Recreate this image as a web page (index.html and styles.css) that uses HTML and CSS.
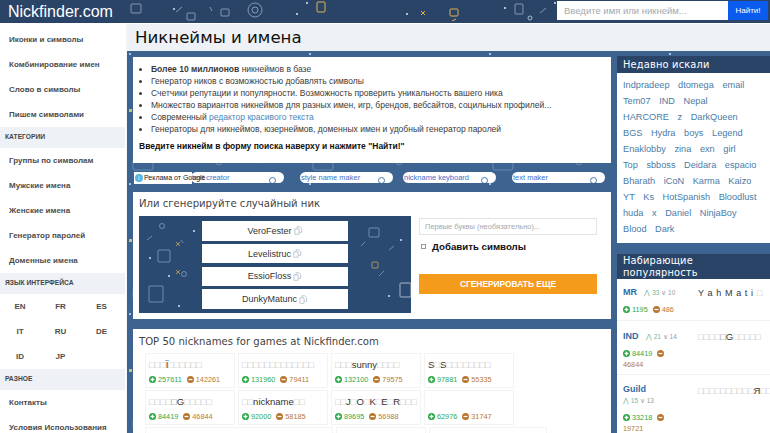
FILE: index.html
```html
<!DOCTYPE html>
<html lang="ru">
<head>
  <meta charset="UTF-8">
  <meta name="viewport" content="width=device-width, initial-scale=1.0">
  <title>Никнеймы и имена</title>
  <link rel="stylesheet" href="styles.css">
</head>
<body>
  <svg class="defs" xmlns="http://www.w3.org/2000/svg" aria-hidden="true">
    <symbol id="plus" viewBox="0 0 10 10"><circle cx="5" cy="5" r="5" fill="#27a844"/><path d="M5 2.2v5.6M2.2 5h5.6" stroke="#fff" stroke-width="1.8"/></symbol>
    <symbol id="minus" viewBox="0 0 10 10"><circle cx="5" cy="5" r="5" fill="#b9752c"/><path d="M2.2 5h5.6" stroke="#fff" stroke-width="1.8"/></symbol>
    <symbol id="copy" viewBox="0 0 10 10"><path d="M1 3.2h4.6v6H1zM3.4 3V.8h3l2.2 2.2v4H5.8" fill="#fff" stroke="#a9b4c2" stroke-width=".8"/></symbol>
  </svg>

  <header class="topbar">
    <a class="logo">Nickfinder.com</a>
    <form class="search">
      <input class="search-input" type="text" placeholder="Введите имя или никнейм...">
      <button class="search-btn" type="button">Найти!</button>
    </form>
  </header>

  <div class="page">
    <!-- боковое меню -->
    <nav class="sidebar">
      <a>Иконки и символы</a>
      <a>Комбинирование имен</a>
      <a>Слово в символы</a>
      <a>Пишем символами</a>
      <h4>Категории</h4>
      <a>Группы по символам</a>
      <a>Мужские имена</a>
      <a>Женские имена</a>
      <a>Генератор паролей</a>
      <a>Доменные имена</a>
      <h4>Язык интерфейса</h4>
      <div class="langs">
        <a>EN</a><a>FR</a><a>ES</a>
        <a>IT</a><a>RU</a><a>DE</a>
        <a>ID</a><a>JP</a>
      </div>
      <h4>Разное</h4>
      <a>Контакты</a>
      <a>Условия Использования</a>
    </nav>

    <main class="main">
      <h1 class="page-title">Никнеймы и имена</h1>
      <div class="columns">
        <div class="content">
          <section class="card intro">
            <ul>
              <li><b>Более 10 миллионов</b> никнеймов в базе</li>
              <li>Генератор ников с возможностью добавлять символы</li>
              <li>Счетчики репутации и популярности. Возможность проверить уникальность вашего ника</li>
              <li>Множество вариантов никнеймов для разных имен, игр, брендов, вебсайтов, социльных профилей...</li>
              <li>Современный <a>редактор красивого текста</a></li>
              <li>Генераторы для никнеймов, юзернеймов, доменных имен и удобный генератор паролей</li>
            </ul>
            <p>Введите никнейм в форму поиска наверху и нажмите "Найти!"</p>
          </section>

          <div class="ads">
            <span class="ad-label"><i class="ad-info">i</i>Реклама от Google</span>
            <a class="pill">text creator</a>
            <a class="pill">style name maker</a>
            <a class="pill pill-tight">nickname keyboard</a>
            <a class="pill">text maker</a>
          </div>

          <section class="card generator">
            <h3>Или сгенерируйте случайный ник</h3>
            <div class="gen-row">
              <div class="gen-names">
                <div class="gen-name">VeroFester <svg class="copy"><use href="#copy"/></svg></div>
                <div class="gen-name">Levelistruc <svg class="copy"><use href="#copy"/></svg></div>
                <div class="gen-name">EssioFloss <svg class="copy"><use href="#copy"/></svg></div>
                <div class="gen-name">DunkyMatunc <svg class="copy"><use href="#copy"/></svg></div>
              </div>
              <form class="gen-form">
                <input class="gen-input" type="text" placeholder="Первые буквы (необязательно)...">
                <label class="gen-check"><input type="checkbox"> Добавить символы</label>
                <button class="gen-btn" type="button">Сгенерировать еще</button>
              </form>
            </div>
          </section>

          <section class="card top">
            <h3>TOP 50 nicknames for games at Nickfinder.com</h3>
            <div class="nick-grid">
              <div class="nick">
                <div class="nick-name"><s>□□□</s>Ï<s>□□□□□□</s></div>
                <div class="stats"><svg class="ico"><use href="#plus"/></svg><span class="up">257611</span><svg class="ico"><use href="#minus"/></svg><span class="down">142261</span></div>
              </div>
              <div class="nick">
                <div class="nick-name"><s>□□□□□□□□□□□□□</s></div>
                <div class="stats"><svg class="ico"><use href="#plus"/></svg><span class="up">131960</span><svg class="ico"><use href="#minus"/></svg><span class="down">79411</span></div>
              </div>
              <div class="nick">
                <div class="nick-name"><s>□□□</s>sunny<s>□□□□</s></div>
                <div class="stats"><svg class="ico"><use href="#plus"/></svg><span class="up">132100</span><svg class="ico"><use href="#minus"/></svg><span class="down">79575</span></div>
              </div>
              <div class="nick">
                <div class="nick-name">S<s>□</s>S<s>□□□□□□□□</s></div>
                <div class="stats"><svg class="ico"><use href="#plus"/></svg><span class="up">97881</span><svg class="ico"><use href="#minus"/></svg><span class="down">55335</span></div>
              </div>
              <div class="nick">
                <div class="nick-name"><s>□□□□</s><u>□</u>G<s>□□□□□</s></div>
                <div class="stats"><svg class="ico"><use href="#plus"/></svg><span class="up">84419</span><svg class="ico"><use href="#minus"/></svg><span class="down">46844</span></div>
              </div>
              <div class="nick">
                <div class="nick-name"><s>□□</s>nickname<s>□□</s></div>
                <div class="stats"><svg class="ico"><use href="#plus"/></svg><span class="up">92000</span><svg class="ico"><use href="#minus"/></svg><span class="down">58185</span></div>
              </div>
              <div class="nick">
                <div class="nick-name"><s>□□</s>J<s>□</s>O<s>□</s>K<s>□</s>E<s>□</s>R<s>□□□</s></div>
                <div class="stats"><svg class="ico"><use href="#plus"/></svg><span class="up">89695</span><svg class="ico"><use href="#minus"/></svg><span class="down">56988</span></div>
              </div>
              <div class="nick">
                <div class="nick-name">&nbsp;</div>
                <div class="stats"><svg class="ico"><use href="#plus"/></svg><span class="up">62976</span><svg class="ico"><use href="#minus"/></svg><span class="down">31747</span></div>
              </div>
              <div class="nick nick-wide"></div>
              <div class="nick"></div>
              <div class="nick nick-long"></div>
            </div>
          </section>
        </div>

        <aside class="rail">
          <section class="rail-box">
            <h3 class="rail-title">Недавно искали</h3>
            <div class="tags">
              <div><a>Indpradeep</a> <a>dtomega</a> <a>email</a></div>
              <div><a>Tem07</a> <a>IND</a> <a>Nepal</a></div>
              <div><a>HARCORE</a> <a>z</a> <a>DarkQueen</a></div>
              <div><a>BGS</a> <a>Hydra</a> <a>boys</a> <a>Legend</a></div>
              <div><a>Enaklobby</a> <a>zina</a> <a>exn</a> <a>girl</a></div>
              <div><a>Top</a> <a>sbboss</a> <a>Deidara</a> <a>espacio</a></div>
              <div><a>Bharath</a> <a>iCoN</a> <a>Karma</a> <a>Kaizo</a></div>
              <div><a>YT</a> <a>Ks</a> <a>HotSpanish</a> <a>Bloodlust</a></div>
              <div><a>huda</a> <a>x</a> <a>Daniel</a> <a>NinjaBoy</a></div>
              <div><a>Blood</a> <a>Dark</a></div>
            </div>
          </section>

          <section class="rail-box">
            <h3 class="rail-title rail-title-two">Набирающие<br>популярность</h3>
            <div class="trend trend-first">
              <div class="trend-info">
                <a class="trend-tag">MR</a> <span class="moves"><em>⋀ 33</em> <i>∨ 10</i></span>
                <div class="stats"><svg class="ico"><use href="#plus"/></svg><span class="up">1195</span><svg class="ico"><use href="#minus"/></svg><span class="down">486</span></div>
              </div>
              <div class="trend-name spaced">Y a h M a t i <s>□</s></div>
            </div>
            <div class="trend">
              <div class="trend-info">
                <a class="trend-tag">IND</a> <span class="moves"><em>⋀ 21</em> <i>∨ 14</i></span>
                <div class="stats"><svg class="ico"><use href="#plus"/></svg><span class="up">84419</span><svg class="ico"><use href="#minus"/></svg><br><span class="down">46844</span></div>
              </div>
              <div class="trend-name"><s>□□□□</s><u>□</u>G<s>□□□□□</s></div>
            </div>
            <div class="trend">
              <div class="trend-info">
                <a class="trend-tag">Guild</a><br><span class="moves"><em>⋀ 15</em> <i>∨ 13</i></span>
                <div class="stats"><svg class="ico"><use href="#plus"/></svg><span class="up">33218</span><svg class="ico"><use href="#minus"/></svg><br><span class="down">19721</span></div>
              </div>
              <div class="trend-name"><s>□□□□□□□□□□</s>Я<s>□□</s></div>
            </div>
          </section>
        </aside>
      </div>
    </main>
  </div>
</body>
</html>
```

FILE: styles.css
```css
* {
  box-sizing: border-box;
}

html, body {
  height: 433px;
  overflow: hidden;
}

body {
  margin: 0;
  font-family: "Liberation Sans", Arial, sans-serif;
  font-size: 8.5px;
  color: #333;
  background: #3d6491;
}

.defs {
  display: none;
}

/* шапка */
.topbar {
  display: flex;
  align-items: flex-start;
  justify-content: space-between;
  height: 24px;
  padding: 1px 2px 0 8px;
  border-bottom: 1px solid #fff;
  background-color: #2a4468;
  background-image: url("data:image/svg+xml,<svg xmlns='http://www.w3.org/2000/svg' width='770' height='23' fill='none' stroke-width='1'><g stroke='%23a9bcd2' stroke-opacity='.7'><rect x='131' y='4' width='10' height='9' rx='1'/><rect x='187' y='13' width='8' height='7' rx='1'/><rect x='221' y='9' width='8' height='7' rx='1'/><circle cx='255' cy='10' r='7'/><circle cx='255' cy='10' r='3'/><rect x='515' y='4' width='8' height='10' rx='1'/><path d='M176 12l6 -5M210 7l2 4M540 13l6-5'/></g><g stroke='%23e0b050'><rect x='317' y='2' width='8' height='10' rx='1'/><path d='M421 11l4 4M425 11l-4 4M452 21l4 -2'/><rect x='450' y='9' width='8' height='7' rx='1'/></g><g fill='%23dfe7f1'><circle cx='174' cy='9' r='1'/><circle cx='297' cy='14' r='1'/><circle cx='307' cy='3' r='1'/><circle cx='407' cy='14' r='1'/><circle cx='505' cy='8' r='1'/><circle cx='555' cy='3' r='1'/></g><circle cx='530' cy='18' r='2' stroke='%23a9bcd2'/></svg>");
}

.logo {
  color: #fff;
  font-size: 16px;
  line-height: 22px;
}

.search {
  display: flex;
  height: 19px;
}

.search-input {
  width: 171px;
  height: 19px;
  border: 0;
  padding: 0 7px;
  font: 9.5px "Liberation Sans", Arial, sans-serif;
  background: #fff;
}

.search-input::placeholder,
.gen-input::placeholder {
  color: #a4a8ae;
}

.search-btn {
  width: 40px;
  border: 0;
  padding: 0;
  color: #fff;
  font: 8px "Liberation Sans", Arial, sans-serif;
  background: #0b5bef;
}

.page {
  display: flex;
  height: 409px;
}

/* боковое меню */
.sidebar {
  flex: 0 0 127px;
  padding: 3px 1px 0 0;
  border-right: 1px solid #f4f6f9;
  background: #fff;
}

.sidebar a {
  display: block;
  height: 25px;
  padding-left: 9px;
  color: #4d4d4d;
  font-size: 8px;
  font-weight: 700;
  line-height: 25px;
  white-space: nowrap;
}

.sidebar h4 {
  height: 21px;
  margin: 0;
  padding-left: 5px;
  color: #444;
  font-size: 6.7px;
  font-weight: 700;
  line-height: 20px;
  text-transform: uppercase;
  background: #eef1f6;
}

.langs {
  display: grid;
  grid-template-columns: 40px 41px 41px;
}

.sidebar .langs a {
  padding: 0;
  text-align: center;
}

/* основная часть */
.main {
  flex: 1;
  min-width: 0;
  overflow: hidden;
  background-color: #3d6491;
  background-image: url("data:image/svg+xml,<svg xmlns='http://www.w3.org/2000/svg' width='180' height='130' fill='none'><g stroke='%237f9fc2' stroke-opacity='.6'><rect x='6' y='4' width='20' height='12' rx='2'/><circle cx='92' cy='8' r='3'/><path d='M40 8l5-3M130 9l5-2'/></g><g fill='%23cfe0f0'><circle cx='66' cy='60' r='1'/><circle cx='3' cy='30' r='1'/><circle cx='160' cy='6' r='1'/><circle cx='120' cy='100' r='1'/></g><path d='M150 60h3v3h-3zM2 85h3v3h-3z' fill='%23c9c07a'/></svg>");
}

.page-title {
  height: 27px;
  margin: 0;
  padding-left: 8px;
  color: #111;
  font-family: "DejaVu Sans", Verdana, sans-serif;
  font-size: 16.6px;
  font-weight: 400;
  line-height: 27px;
  background: #eef1f6;
}

.columns {
  display: flex;
  gap: 6px;
  padding: 6px 0 0 6px;
}

.content {
  flex: 0 0 478px;
  min-width: 0;
}

.card {
  background: #fff;
}

.intro {
  height: 106px;
  padding: 6px 6px 0 6px;
}

.intro ul {
  margin: 0;
  padding-left: 12px;
  line-height: 12px;
  color: #3a3a3a;
}

.intro li a {
  color: #4a86b8;
}

.intro p {
  margin: 5px 0 0;
  color: #111;
  font-weight: 700;
  line-height: 12px;
}

/* реклама */
.ads {
  display: flex;
  align-items: center;
  gap: 16px;
  position: relative;
  height: 29px;
  padding-left: 58px;
}

.ad-label {
  position: absolute;
  z-index: 1;
  left: 1px;
  top: 9px;
  width: 58px;
  height: 12px;
  color: #222;
  font-size: 7px;
  line-height: 12px;
  white-space: nowrap;
  background: #fff;
}

.ad-info {
  display: inline-block;
  width: 8px;
  height: 8px;
  margin: 0 1px;
  border-radius: 50%;
  color: #fff;
  font-size: 6px;
  font-style: normal;
  line-height: 8px;
  text-align: center;
  background: #5db4e0;
}

.pill {
  position: relative;
  flex: 0 0 93px;
  height: 11px;
  padding-left: 1px;
  border-radius: 6px;
  overflow: hidden;
  color: #3d72c9;
  font-size: 7.5px;
  line-height: 11px;
  white-space: nowrap;
  background: #fff;
}

.pill-tight {
  margin-left: -6px;
}

.pill::after {
  content: "";
  position: absolute;
  right: 8px;
  bottom: -1px;
  width: 5px;
  height: 5px;
  border: 1px solid #4a76a8;
  border-radius: 50%;
}

/* генератор */
.generator {
  height: 127px;
  padding: 4px 6px 0;
}

.generator h3,
.top h3 {
  margin: 0;
  color: #444;
  font-family: "DejaVu Sans", Verdana, sans-serif;
  font-size: 10.1px;
  font-weight: 400;
  line-height: 15px;
}

.gen-row {
  display: flex;
  gap: 8px;
  margin-top: 5px;
}

.gen-names {
  display: flex;
  flex: 0 0 272px;
  flex-direction: column;
  align-items: center;
  gap: 3.3px;
  height: 97px;
  padding-top: 5px;
  background-color: #2b4a72;
  background-image: url("data:image/svg+xml,<svg xmlns='http://www.w3.org/2000/svg' width='272' height='97' fill='none'><g stroke='%238ba3c0' stroke-opacity='.75'><rect x='19' y='34' width='12' height='12' rx='1'/><rect x='10' y='70' width='14' height='16' rx='1'/><circle cx='23' cy='10' r='2.5'/><circle cx='45' cy='58' r='2.5'/><rect x='230' y='12' width='10' height='9' rx='1'/><path d='M8 24l5-4M42 24l2 3M222 30l4-4M240 60l5-5M250 34l5-4'/></g><g stroke='%23c9a85a' stroke-opacity='.8'><path d='M37 26l4 4M41 26l-4 4M37 54l4 4M41 54l-4 4'/><rect x='233' y='46' width='6' height='6' rx='1'/></g><rect x='261' y='67' width='11' height='14' rx='1' stroke='%23a6b6c9'/><g fill='%23d7e1ec'><circle cx='11' cy='42' r='1'/><circle cx='30' cy='60' r='1'/><circle cx='55' cy='15' r='1'/><circle cx='40' cy='90' r='1'/><circle cx='250' cy='80' r='1'/><circle cx='262' cy='24' r='1'/></g></svg>");
}

.gen-name {
  display: flex;
  align-items: center;
  justify-content: center;
  gap: 2px;
  flex: 0 0 19.5px;
  width: 146px;
  color: #333;
  font-size: 9px;
  background: #fff;
}

.copy {
  width: 9px;
  height: 9px;
}

.gen-form {
  flex: 0 0 178px;
  padding-top: 2px;
}

.gen-input {
  display: block;
  width: 100%;
  height: 17px;
  border: 1px solid #e2e4e8;
  padding: 0 5px;
  font: 7.5px "Liberation Sans", Arial, sans-serif;
}

.gen-check {
  display: flex;
  align-items: center;
  gap: 6px;
  height: 16px;
  margin-top: 3px;
  color: #111;
  font-size: 9.7px;
  font-weight: 700;
}

.gen-check input {
  appearance: none;
  width: 5px;
  height: 5px;
  margin: 0 0 0 2px;
  border: 1px solid #999;
  background: #fff;
}

.gen-btn {
  display: block;
  width: 100%;
  height: 20px;
  margin-top: 20px;
  border: 0;
  color: #fff;
  font: 700 8.4px "Liberation Sans", Arial, sans-serif;
  text-transform: uppercase;
  background: #f49b1c;
}

/* топ ников */
.top {
  height: 110px;
  margin-top: 10px;
  padding: 5px 6px 0;
}

.nick-grid {
  display: flex;
  flex-wrap: wrap;
  gap: 2px 3px;
  margin: 4px 0 0 6px;
}

.nick {
  min-width: 90px;
  height: 35px;
  padding: 4px 3px 0;
  border: 1px solid #f2f3f5;
}

.nick-wide {
  width: 188px;
}

.nick-long {
  width: 118px;
}

.nick-name,
.trend-name {
  height: 14px;
  color: #333;
  font-size: 9.5px;
  line-height: 14px;
  white-space: nowrap;
}

s {
  color: #bcbcbc;
  font-size: 9.2px;
  text-decoration: none;
}

u {
  color: #777;
  font-size: 9.2px;
  text-decoration: none;
}

.stats {
  margin-top: 2px;
  font-size: 7.3px;
  line-height: 11px;
  white-space: nowrap;
}

.ico {
  width: 7px;
  height: 7px;
  margin-right: 2px;
  vertical-align: -1px;
}

.up {
  color: #2fa84f;
  margin-right: 5px;
}

.down {
  color: #b87a35;
}

/* правая колонка */
.rail {
  flex: 0 0 153px;
  margin-top: -1px;
}

.rail-box {
  margin-bottom: 11px;
  background: #fff;
}

.rail-title {
  margin: 0;
  padding: 3px 0 2px 6px;
  color: #fff;
  font-family: "DejaVu Sans", Verdana, sans-serif;
  font-size: 9.8px;
  font-weight: 400;
  letter-spacing: .2px;
  line-height: 12px;
  background: #2a4468;
}

.rail-title-two {
  padding: 1px 0 0 6px;
}

.tags {
  height: 170px;
  padding: 4px 2px 0 6px;
  font-size: 9.2px;
  line-height: 16px;
  white-space: nowrap;
}

.tags a {
  margin-right: 6px;
  color: #4a7ca8;
}

.trend {
  display: flex;
  padding: 9px 0 4px 6px;
  border-bottom: 1px solid #f1f2f4;
}

.trend-first {
  padding-top: 7px;
  padding-bottom: 5px;
}

.trend-info {
  flex: 0 0 75px;
}

.trend-tag {
  color: #2f6da6;
  font-size: 9px;
  font-weight: 700;
}

.moves {
  margin-left: 5px;
  font-size: 6.5px;
  line-height: 14px;
}

.moves em {
  color: #6db79b;
  font-style: normal;
}

.moves i {
  color: #9a9a9a;
  font-style: normal;
}

.trend-info br + .moves {
  margin-left: 0;
}

.trend .stats {
  margin-top: 4px;
}

.trend-name {
  flex: 0 0 auto;
}

.spaced {
  font-size: 9px;
  letter-spacing: .6px;
}
```
